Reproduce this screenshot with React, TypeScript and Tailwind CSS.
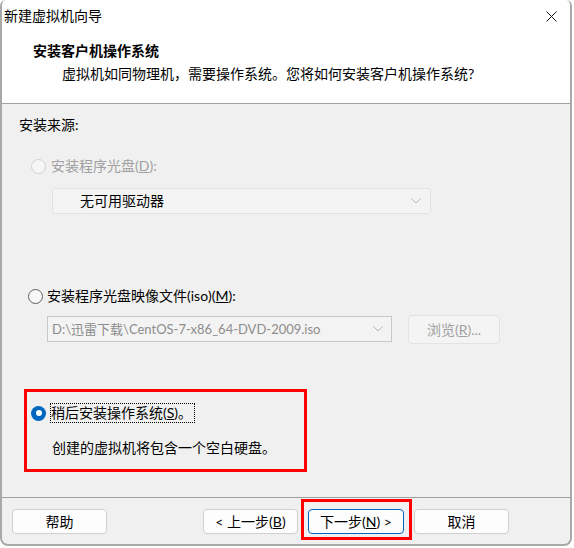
import React from "react";

const font = { fontFamily: 'Lato, "Noto Sans CJK SC", sans-serif' };

function Chevron() {
  return (
    <svg width="10" height="6" viewBox="0 0 10 6" className="shrink-0">
      <path d="M0.5 0.5 L5 5 L9.5 0.5" fill="none" stroke="#b4b4b4" strokeWidth="1" />
    </svg>
  );
}

function Btn({ children, primary }: { children: React.ReactNode; primary?: boolean }) {
  return (
    <div
      className={
        "h-[25px] flex items-center justify-center rounded-[4px] bg-[#fdfdfd] text-[14px] leading-[20px] text-black border " +
        (primary ? "border-[#0067c0]" : "border-[#d0d0d0]")
      }
    >
      {children}
    </div>
  );
}

export default function App() {
  return (
    <div className="w-[574px] h-[548px] bg-white" style={font}>
      <div className="w-[572px] h-[546px] flex flex-col border-x-2 border-b-2 border-[#a9a9a9] rounded-t-[6px] rounded-b-[8px] overflow-hidden bg-[#f0f0f0]">
        {/* title + header */}
        <div className="h-[103px] bg-white shrink-0">
          <div className="flex items-center justify-between pt-[6px] pl-[2px] pr-[13px]">
            <span className="text-[14px] leading-[20px] text-black">新建虚拟机向导</span>
            <svg width="11" height="11" viewBox="0 0 11 11">
              <path d="M0.5 0.5 L10.5 10.5 M10.5 0.5 L0.5 10.5" stroke="#1a1a1a" strokeWidth="1" />
            </svg>
          </div>
          <div className="mt-[15px] pl-[31px] text-[14px] leading-[20px] font-bold text-black">安装客户机操作系统</div>
          <div className="mt-[3px] pl-[60px] text-[14px] leading-[20px] text-black">
            虚拟机如同物理机，需要操作系统。您将如何安装客户机操作系统?
          </div>
        </div>
        <div className="h-px bg-[#a0a0a0] shrink-0" />

        {/* body */}
        <div className="h-[393px] shrink-0 flex flex-col items-start text-[14px] leading-[20px]">
          <div className="mt-[11px] ml-[17px] text-black">安装来源:</div>

          <div className="mt-[21px] ml-[29px] flex items-center gap-[5px]">
            <span className="w-[15px] h-[15px] rounded-full border border-[#d2d2d2] bg-[#f6f6f6]" />
            <span className="text-[#a0a0a0]">
              安装程序光盘(<span className="underline">D</span>):
            </span>
          </div>

          <div className="mt-[12px] ml-[50px] w-[379px] h-[26px] flex items-center justify-between pl-[27px] pr-[9px] bg-[#f4f4f4] border border-[#e2e2e2] rounded-[3px]">
            <span className="text-black">无可用驱动器</span>
            <Chevron />
          </div>

          <div className="mt-[72px] ml-[26px] flex items-center gap-[4px]">
            <span className="w-[15px] h-[15px] rounded-full border border-[#5f5f5f] bg-[#f8f8f8]" />
            <span className="text-black">
              安装程序光盘映像文件(iso)(<span className="underline">M</span>):
            </span>
          </div>

          <div className="mt-[10px] ml-[45px] flex items-start">
            <div className="w-[345px] h-[26px] flex items-center justify-between pl-[4px] pr-[8px] bg-[#f3f3f3] border border-[#c8c8c8]">
              <span className="text-[#8d8d8d] text-[13px]">D:\迅雷下载\CentOS-7-x86_64-DVD-2009.iso</span>
              <Chevron />
            </div>
            <div className="ml-[16px] -mt-px w-[92px] h-[29px] flex items-center justify-center rounded-[4px] bg-[#f4f4f4] border border-[#e2e2e2] text-[#a0a0a0]">
              浏览(<span className="underline">R</span>)...
            </div>
          </div>

          <div className="mt-[45px] ml-[22px] w-[283px] h-[83px] border-[3px] border-[#ff0000] flex flex-col items-start">
            <div className="mt-[11px] ml-[4px] flex items-center gap-[4px]">
              <span className="w-[15px] h-[15px] rounded-full bg-[#0067c0] flex items-center justify-center">
                <span className="w-[6px] h-[6px] rounded-full bg-white" />
              </span>
              <span className="h-[20px] border border-dotted border-black text-black leading-[18px] pr-[2px]">
                稍后安装操作系统(<span className="underline">S</span>)。
              </span>
            </div>
            <div className="mt-[15px] ml-[25px] text-black">创建的虚拟机将包含一个空白硬盘。</div>
          </div>
        </div>
        <div className="h-px bg-[#a0a0a0] shrink-0" />

        {/* footer */}
        <div className="flex-1 flex items-start pt-[11px] pr-[61px]">
          <div className="ml-[10px] w-[95px]">
            <Btn>帮助</Btn>
          </div>
          <div className="ml-auto flex gap-[10px]">
            <div className="w-[95px]">
              <Btn>
                &lt; 上一步(<span className="underline">B</span>)
              </Btn>
            </div>
            <div className="w-[96px] relative">
              <Btn primary>
                下一步(<span className="underline">N</span>) &gt;
              </Btn>
              <span className="absolute left-[-7px] right-[-8px] top-[-10px] bottom-[-6px] border-[3px] border-[#ff0000]" />
            </div>
            <div className="w-[95px]">
              <Btn>取消</Btn>
            </div>
          </div>
        </div>
      </div>
    </div>
  );
}
